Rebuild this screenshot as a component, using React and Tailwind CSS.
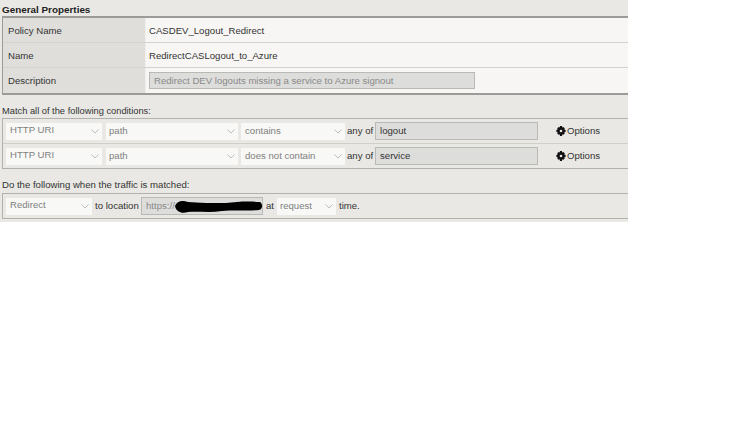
const font = { fontFamily: '"Liberation Sans", Arial, sans-serif' };

function Chevron() {
  return (
    <svg width="8" height="5" viewBox="0 0 8 5" className="shrink-0">
      <path d="M0.5 0.5 L4 4 L7.5 0.5" fill="none" stroke="#bdbdbd" strokeWidth="1" />
    </svg>
  );
}

function Select({ label, className, top = false }) {
  return (
    <div className={`flex h-[17px] items-center justify-between bg-[#f8f8f6] pr-[3px] text-[9.6px] text-[#808080] ${className}`}>
      <span className={top ? "-mt-[1px]" : ""}>{label}</span>
      <Chevron />
    </div>
  );
}

function Gear() {
  return (
    <svg width="10" height="10" viewBox="0 0 10 10" className="shrink-0">
      <path
        d="M4 0h2l.3 1.4 1-.5L8.8 2.2l-.6 1L9.6 4v2l-1.4.3.6 1.2-1.4 1.3-1-.6L6 10H4l-.4-1.8-1 .6L1.2 7.5l.6-1.2L.4 6V4l1.4-.8-.6-1L2.7.9l1 .5z"
        fill="#111"
      />
      <circle cx="5" cy="5" r="1.3" fill="#e9e8e4" />
    </svg>
  );
}

function ConditionRow({ op, value, border, height }) {
  return (
    <div className={`flex items-center pl-[3px] ${height} ${border ? "border-b border-[#cfcec9]" : ""}`}>
      <Select label="HTTP URI" className="w-[96px] pl-[4px]" top />
      <Select label="path" className="ml-[4px] w-[132px] pl-[3px]" />
      <Select label={op} className="ml-[3px] w-[104px] pl-[4px]" />
      <span className="ml-[2px] w-[28px] whitespace-nowrap text-[9.6px] text-[#333]">any of</span>
      <div className="flex h-[18px] w-[163px] items-center border border-[#b9b9b5] bg-[#dddddb] pl-[4px] text-[9.6px] text-[#333]">
        {value}
      </div>
      <div className="ml-[18px] flex items-center gap-[1px] text-[9.6px] text-[#333]">
        <Gear />
        <span>Options</span>
      </div>
    </div>
  );
}

function PropRow({ label, children, border }) {
  return (
    <div className={`flex h-[25px] ${border ? "border-b border-[#d3d2cd]" : ""}`}>
      <div className="flex w-[142px] shrink-0 items-center bg-[#dfdeda] pl-[5px] pt-[2px] text-[9.6px] text-[#333]">{label}</div>
      <div className="flex flex-1 items-center border-l border-[#f1f0ed] bg-[#f7f6f4] pl-[3px] text-[9.6px] text-[#333]">{children}</div>
    </div>
  );
}

export default function App() {
  return (
    <div style={font} className="min-h-[422px] bg-white">
      <div className="h-[222px] w-[628px] bg-[#e9e8e4] pl-[2px]">
        <div className="flex h-[16px] items-end pb-[1px] text-[9.9px] font-bold leading-none text-[#222]">General Properties</div>
        <div className="border-y-2 border-l border-[#9c9b97]">
          <PropRow label="Policy Name" border><span className="mt-[2px]">CASDEV_Logout_Redirect</span></PropRow>
          <PropRow label="Name" border><span className="mt-[2px]">RedirectCASLogout_to_Azure</span></PropRow>
          <PropRow label="Description">
            <div className="flex h-[17px] w-[326px] items-center border border-[#b9b9b5] bg-[#dddddb] pl-[4px] pt-[1px] text-[#8a8a8a]">
              Redirect DEV logouts missing a service to Azure signout
            </div>
          </PropRow>
        </div>
        <div className="flex h-[23px] items-end pb-[2px] text-[9.3px] leading-none text-[#333]">Match all of the following conditions:</div>
        <div className="border-y border-l border-[#b2b1ad]">
          <ConditionRow op="contains" value="logout" border height="h-[25px]" />
          <ConditionRow op="does not contain" value="service" height="h-[24px]" />
        </div>
        <div className="flex h-[24px] items-end pb-[3px] text-[9.6px] leading-none text-[#333]">Do the following when the traffic is matched:</div>
        <div className="flex h-[26px] items-center border-y border-l border-[#b2b1ad] pl-[3px] text-[9.6px] text-[#333]">
          <Select label="Redirect" className="w-[86px] pl-[4px]" top />
          <span className="ml-[3px] w-[46px] whitespace-nowrap">to location</span>
          <div className="relative flex h-[18px] w-[122px] items-center border border-[#b9b9b5] bg-[#dddddb] pl-[4px] text-[#8a8a8a]">
            https://
            <svg width="90" height="17" viewBox="0 0 90 17" className="absolute left-[32px] top-0">
              <path
                d="M1 8 C3 3 8 2 14 4 C24 5 40 5 52 5 C62 4 72 3 86 4 C89 6 89 11 85 12 C70 13 58 12 48 13 C36 15 24 13 14 14 C8 16 2 14 1 8 Z"
                fill="#000"
              />
            </svg>
          </div>
          <span className="ml-[3px] w-[11px]">at</span>
          <Select label="request" className="w-[59px] pl-[3px]" />
          <span className="ml-[3px]">time.</span>
        </div>
      </div>
    </div>
  );
}
